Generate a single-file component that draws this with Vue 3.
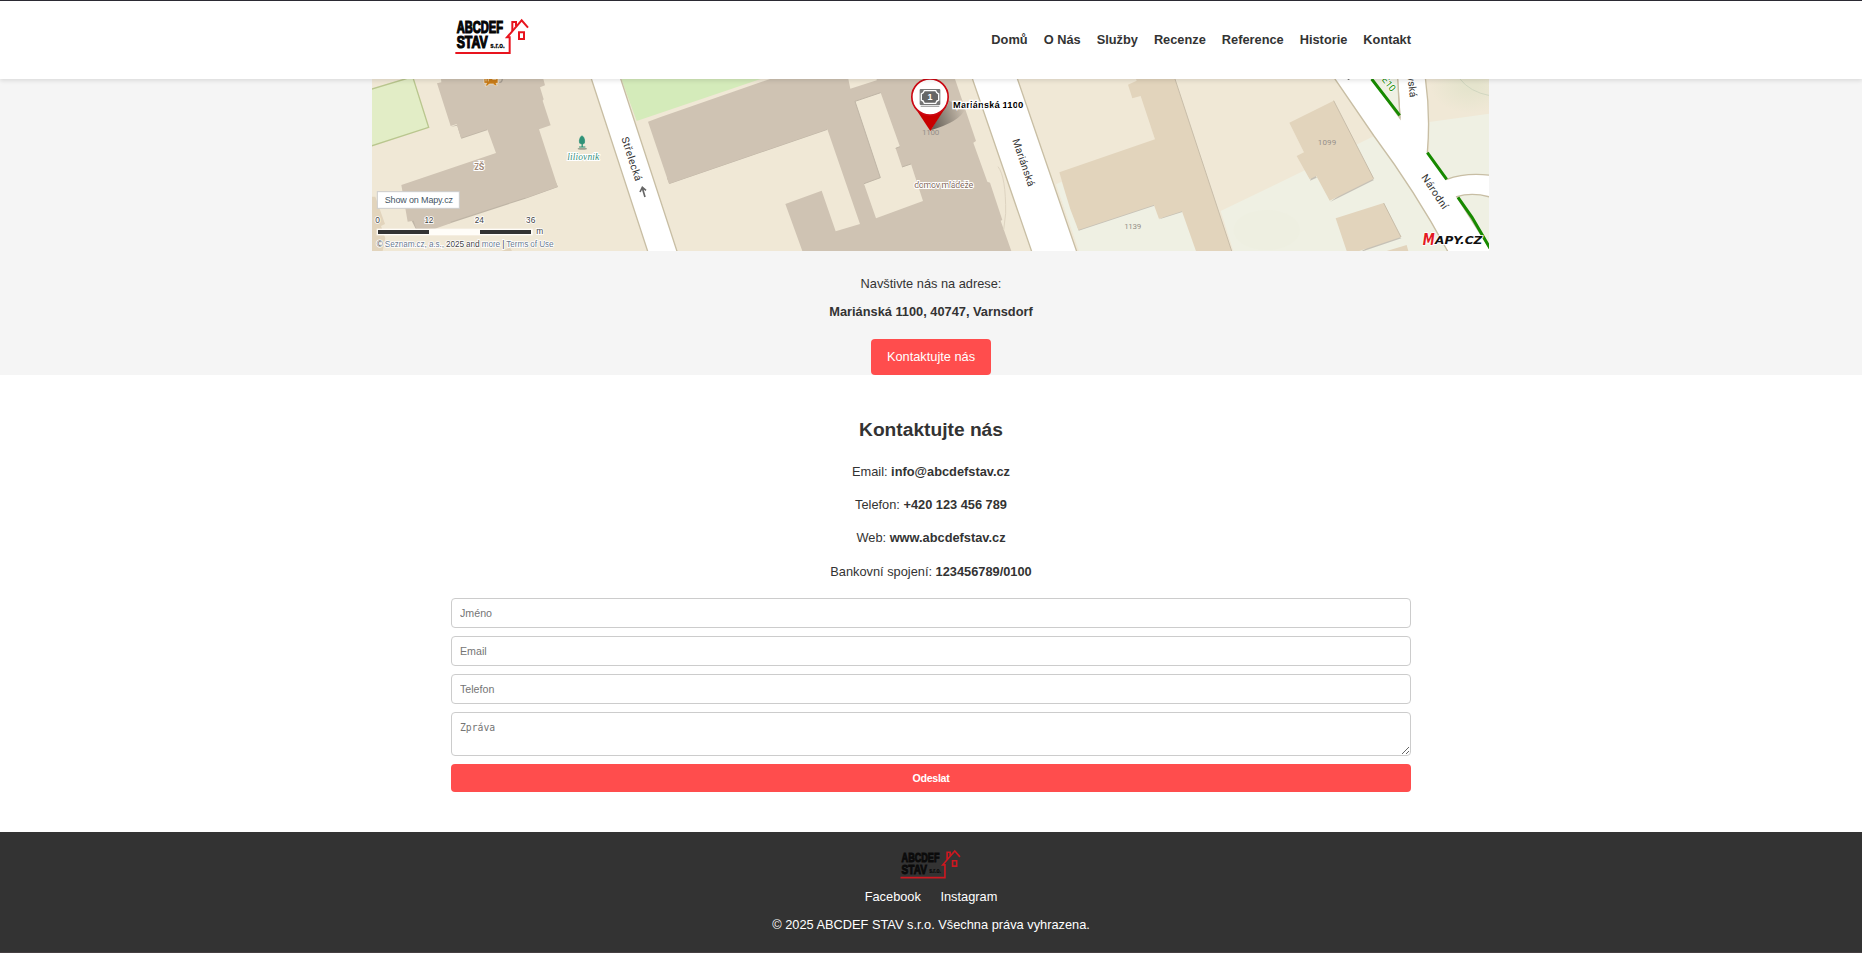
<script setup>
const nav = ['Domů', 'O Nás', 'Služby', 'Recenze', 'Reference', 'Historie', 'Kontakt']
const contacts = [
  ['Email:', 'info@abcdefstav.cz'],
  ['Telefon:', '+420 123 456 789'],
  ['Web:', 'www.abcdefstav.cz'],
  ['Bankovní spojení:', '123456789/0100'],
]
const fields = ['Jméno', 'Email', 'Telefon']
</script>

<template>
  <div class="page">
    <header class="header">
      <div class="bar">
        <svg class="logo" viewBox="30 54 222 110" role="img">
          <g id="brand">
            <g class="brand-text">
              <text x="35" y="100" font-size="47" textLength="139" lengthAdjust="spacingAndGlyphs">ABCDEF</text>
              <text x="35" y="145" font-size="49" textLength="93" lengthAdjust="spacingAndGlyphs">STAV</text>
              <text x="136" y="143" font-size="24" textLength="43" lengthAdjust="spacingAndGlyphs" class="thin">s.r.o.</text>
            </g>
            <g fill="none" stroke="#e8141e" stroke-width="6">
              <path d="M31 159H194V112H186L230 61L249 83" />
              <path d="M202 93V66H213V79" />
              <path d="M222 97H237V117H222Z" />
            </g>
          </g>
        </svg>
        <nav class="nav">
          <a v-for="item in nav" :key="item">{{ item }}</a>
        </nav>
      </div>
    </header>

    <section class="location">
      <svg class="map" viewBox="6 27 3351 516" preserveAspectRatio="none">
        <defs>
          <linearGradient id="pinShade" x1="0" y1="0.6" x2="1" y2="0.3">
            <stop offset="0" stop-color="#000" stop-opacity=".5" />
            <stop offset="1" stop-color="#000" stop-opacity="0" />
          </linearGradient>
          <radialGradient id="meadow">
            <stop offset=".2" stop-color="#e5e4cd" />
            <stop offset="1" stop-color="#e5e4cd" stop-opacity="0" />
          </radialGradient>
        </defs>
        <rect x="0" y="20" width="3360" height="530" fill="#f0e8d6" />
        <!-- grass and yards -->
        <path d="M0 59L105 27L128 20L176 172L0 229Z" fill="#e2edc6" stroke="#b9c68e" stroke-width="4" />
        <path d="M754 27L800 153L1172 27Z" fill="#d4ebba" />
        <path d="M2058 343L2075 335L2125 480L2352 405L2367 446L2436 424L2478 543H2127Z" fill="#eff0e3" />
        <path d="M2552 423L2800 303L3012 198L3178 250V156L3360 131V543H2590Z" fill="#eff0e3" />
        <ellipse cx="3300" cy="45" rx="120" ry="85" fill="url(#meadow)" />
        <path d="M3270 27Q3300 66 3360 77" fill="none" stroke="#c5ceb8" stroke-width="2" />
        <ellipse cx="2690" cy="480" rx="100" ry="60" fill="#eeefe1" />
        <!-- buildings -->
        <g fill="#bfb5a6" transform="translate(1 4)">
          <path d="M139 478L242 455L465 382L563 347L555 330L120 440Z" />
          <path d="M242 166L260 160L273 202L352 176L340 150Z" />
          <path d="M897 338L1372 175L1360 165L890 320Z" />
        </g>
        <g fill="#cfc3b3">
          <path d="M213 27L214 37L201 40L242 168L260 162L273 204L352 178L378 249L94 345L113 455L131 452L139 478L195 476L242 460V455L465 383L468 384L563 350L507 178L542 166L518 92L521 88L510 52L525 46L520 27Z" />
          <path d="M834 155L870 142L1200 27H1435L1441 56L1520 31V27H1755L1818 213L1810 218L1852 335L1860 338L1897 450L1892 452L1924 543H1297L1246 402L1355 362L1397 484L1470 462L1372 178L897 341Z" />
        </g>
        <path d="M1455 94L1532 68L1590 230L1577 235L1596 291L1623 282L1659 393L1518 445L1482 341L1531 323Z" fill="#f0e8d6" />
        <path d="M1455 94L1532 68M1482 341L1531 323L1455 94M1577 235L1590 230M1596 291L1623 282" fill="none" stroke="#bfb5a6" stroke-width="3" />
        <g fill="#c6c1b6" transform="translate(1 4)">
          <path d="M2125 478L2352 403L2340 380L2120 460ZM2367 444L2436 422V400Z" />
          <path d="M2879 392L3011 326L2990 310ZM2819 328L2839 319L2830 300ZM2968 543L3093 501L3070 480Z" />
        </g>
        <g fill="#e2d4bc">
          <path d="M2068 307L2355 208L2312 78L2287 85L2274 44L2300 32L2298 27H2415L2490 255L2585 543H2478L2436 424L2367 446L2352 405L2125 480L2101 418L2087 372Z" />
          <path d="M2758 158L2891 92L3011 326L2879 392L2839 318L2819 328L2780 258L2802 247Z" />
          <path d="M2897 445L3041 399L3093 501L2968 543H2930ZM3050 543L3110 525L3115 543Z" />
          <path d="M6 380H16L45 462L33 468L46 505L38 543H6ZM395 543L420 533L426 543Z" />
        </g>
        <path d="M2415 27L2490 255L2585 543M2891 92L3011 326M3041 399L3093 501" fill="none" stroke="#c8bda9" stroke-width="3" />
        <path d="M1884 290Q1908 320 1907 430L1901 480" fill="none" stroke="#ded4c1" stroke-width="3" />
        <!-- streets -->
        <g fill="#fff" stroke="#c8bea4" stroke-width="4">
          <path d="M661 17H749L924 553H836Z" />
          <path d="M1804 17H1939L2123 553H1988Z" />
          <path transform="translate(2490 0)" d="M398 17L405 27L522 198Q650 370 748 553H880L770 380Q820 364 880 384V317Q800 306 740 328L682 248Q692 130 675 17H592L600 145L508 17Z" />
        </g>
        <path d="M3005 27H3083L3088 140Z" fill="#eff0e3" />
        <path d="M3083 27L3090 145" stroke="#c8bea4" stroke-width="4" />
        <g fill="none" stroke="#178a00" stroke-width="9">
          <path d="M3005 27L3089 136M3172 248L3230 328M3264 382L3306 442L3360 535" />
        </g>
        <!-- map labels -->
        <g class="street" fill="#333" text-anchor="middle">
          <text transform="translate(775 270) rotate(72)" textLength="137">Střelecká</text>
          <text transform="translate(1951 281) rotate(71)" textLength="148">Mariánská</text>
          <text transform="translate(3186 371) rotate(56)" textLength="118">Národní</text>
          <text transform="translate(3116 51) rotate(84)">vská</text>
          <text transform="translate(3049 48) rotate(52)" class="route">E10</text>
        </g>
        <path d="M2933 28L2941 24" stroke="#555" stroke-width="5" />
        <path d="M825 381L817 354M810 366L817 352L828 361" fill="none" stroke="#666" stroke-width="5" />
        <g class="label" text-anchor="middle">
          <text x="328" y="299" textLength="30" font-weight="bold" fill="#a08878">ZŠ</text>
          <text x="1682" y="195" textLength="52" class="number">1100</text>
          <text x="2288" y="476" textLength="51" class="number">1139</text>
          <text x="2871" y="226" textLength="55" class="number">1099</text>
          <text x="1721" y="353" textLength="177" fill="#846a5b">domov mládeže</text>
          <text x="640" y="270" textLength="96" class="tree">liliovník</text>
        </g>
        <ellipse cx="637" cy="236" rx="14" ry="3" fill="#9ba08f" />
        <path d="M636 196C646 203 646 211 645 218Q643 223 639 223V229H646V233H627V229H634V223Q629 223 627 218C626 210 627 202 636 196Z" fill="#2f9277" stroke="#f3eedf" stroke-width="1" />
        <g fill="#c97c18" stroke="#f5ebd9" stroke-width="2">
          <path d="M342 20H384V40H378L382 47H375L370 42H358L352 48H345L350 40H342Z" />
          <path d="M348 27V34M355 27V34M367 28H379" />
        </g>
        <path d="M388 37Q397 38 397 24" fill="none" stroke="#a49b90" stroke-width="4" />
        <!-- place marker -->
        <path d="M1682 181L1724 112Q1739 105 1735 91L1785 118Q1770 155 1682 181Z" fill="url(#pinShade)" />
        <path d="M1632 109L1681 183L1729 109Z" fill="#c80000" />
        <circle cx="1680" cy="81" r="54.500" fill="#fff" stroke="#cc0712" stroke-width="5" />
        <path d="M1652 109H1708" stroke="#aaa" stroke-width="4" />
        <rect x="1649" y="57" width="62" height="48" rx="3" fill="#777" />
        <path d="M1663 62H1697Q1699 70 1706 72V90Q1699 92 1697 100H1663Q1661 92 1654 90V72Q1661 70 1663 62Z" fill="#666" stroke="#fff" stroke-width="4" />
        <text x="1680" y="91" class="note" text-anchor="middle">1</text>
        <text x="1749" y="113" class="place" textLength="211">Mariánská 1100</text>
        <!-- map controls -->
        <rect x="22" y="365" width="246" height="50" fill="#fff" stroke="#ccc" stroke-width="3" />
        <text x="44" y="399" class="show" textLength="205">Show on Mapy.cz</text>
        <g class="scale" text-anchor="middle">
          <text x="23" y="459">0</text>
          <text x="177" y="459" textLength="27">12</text>
          <text x="328" y="459" textLength="28">24</text>
          <text x="482" y="459" textLength="28">36</text>
          <text x="509" y="492">m</text>
        </g>
        <rect x="20" y="476" width="468" height="20" fill="#fffdf8" />
        <path d="M24 486H177M330 486H483" stroke="#333" stroke-width="12" />
        <text x="20" y="531" class="credit" textLength="531">© <tspan>Seznam.cz, a.s.,</tspan> 2025 and <tspan>more</tspan> | <tspan>Terms of Use</tspan></text>
        <g class="mapy">
          <text x="3158" y="525" font-size="49" fill="#e31922" textLength="36" lengthAdjust="spacingAndGlyphs">M</text>
          <text x="3195" y="523" font-size="34" fill="#111" textLength="142" lengthAdjust="spacingAndGlyphs">APY.CZ</text>
        </g>
      </svg>
      <p class="visit">Navštivte nás na adrese:</p>
      <p class="visit"><strong>Mariánská 1100, 40747, Varnsdorf</strong></p>
      <a class="cta">Kontaktujte nás</a>
    </section>

    <section class="contact">
      <h2>Kontaktujte nás</h2>
      <p v-for="row in contacts" :key="row[0]">{{ row[0] }} <strong>{{ row[1] }}</strong></p>
      <form class="form" @submit.prevent>
        <input v-for="f in fields" :key="f" type="text" :placeholder="f" />
        <textarea placeholder="Zpráva"></textarea>
        <button type="submit">Odeslat</button>
      </form>
    </section>

    <footer class="footer">
      <svg class="footer-logo" viewBox="30 54 222 110"><use href="#brand" /></svg>
      <div class="social"><a>Facebook</a><a>Instagram</a></div>
      <p>© 2025 ABCDEF STAV s.r.o. Všechna práva vyhrazena.</p>
    </footer>
  </div>
</template>

<style>
body {
  margin: 0;
  overflow: hidden;
}
</style>

<style scoped>
* {
  box-sizing: border-box;
}
.page {
  height: 953px;
  display: flex;
  flex-direction: column;
  font: 12.8px/20.48px "Liberation Sans", Arial, sans-serif;
  color: #333;
  background: #fff;
}
.header {
  height: 79px;
  flex: none;
  border-top: 1px solid #2b2a33;
  background: #fff;
  box-shadow: 0 2px 4px rgba(0, 0, 0, 0.1);
  position: relative;
}
.bar {
  width: 960px;
  height: 78px;
  margin: 0 auto;
  padding: 17px 0 0 4px;
  display: flex;
  justify-content: space-between;
}
.logo {
  width: 74px;
  height: 36.7px;
}
.brand-text text {
  font-family: "Liberation Sans", Arial, sans-serif;
  font-weight: bold;
  fill: #050505;
  stroke: #050505;
  stroke-width: 3.6px;
}
.brand-text .thin {
  stroke-width: 0.8px;
}
.nav {
  display: flex;
  gap: 16px;
  padding-top: 12px;
  font-weight: bold;
}
.location {
  height: 296px;
  flex: none;
  background: #f5f5f5;
  display: flex;
  flex-direction: column;
  align-items: center;
}
.map {
  width: 1117px;
  height: 172px;
  flex: none;
  margin: 0 1px 22.5px 0;
}
.visit {
  margin: 0 0 8px;
}
.cta {
  width: 120px;
  height: 36px;
  margin-top: auto;
  border-radius: 4px;
  background: #ff4d4d;
  color: #fff;
  text-align: center;
  line-height: 35px;
}
.contact {
  height: 457px;
  flex: none;
  width: 960px;
  margin: 0 auto;
  padding-top: 40px;
  text-align: center;
}
.contact h2 {
  margin: 0 0 16px;
  font-size: 19.2px;
  line-height: 30.7px;
}
.contact p {
  margin: 0 0 12.8px;
}
.form {
  display: flex;
  flex-direction: column;
  gap: 8px;
  padding-top: 3px;
}
.form input,
.form textarea {
  display: block;
  width: 100%;
  height: 30px;
  margin: 0;
  padding: 8px;
  border: 1px solid #ccc;
  border-radius: 4px;
  background: #fff;
  outline: none;
  font: 10.667px "Liberation Sans", Arial, sans-serif;
}
.form textarea {
  height: 44px;
  font: 9.75px/13px "DejaVu Sans Mono", monospace;
}
.form ::placeholder {
  color: #757575;
}
.form button {
  height: 28px;
  border: 0;
  border-radius: 4px;
  padding: 0;
  background: #ff4d4d;
  color: #fff;
  font: bold 10.667px "Liberation Sans", Arial, sans-serif;
  letter-spacing: -0.3px;
}
.footer {
  flex: 1;
  display: flex;
  flex-direction: column;
  align-items: center;
  padding-top: 16.5px;
  background: #333;
  border-bottom: 1px solid #453f42;
  color: #fff;
}
.footer-logo {
  width: 61px;
  height: 30px;
  margin-right: 1px;
  opacity: 0.85;
}
.social {
  display: flex;
  gap: 19.5px;
  margin-top: 8.5px;
}
.footer p {
  margin: 8px 0 0;
}
.street text {
  font: 31px Roboto, sans-serif;
  paint-order: stroke;
  stroke: #fff;
  stroke-width: 4px;
}
.street .route {
  font-size: 28px;
  fill: #178a00;
}
.label text {
  font-family: Roboto, sans-serif;
  font-size: 27px;
  paint-order: stroke;
  stroke: #fff;
  stroke-width: 6px;
}
.label .number {
  fill: #96908a;
  font-size: 24px;
  stroke-width: 0;
}
.label .tree {
  font: italic 29px "Liberation Serif", serif;
  fill: #35917e;
}
.note {
  font: bold 27px "Liberation Sans", sans-serif;
  fill: #fff;
}
.place {
  font: bold 28.5px "Liberation Sans", sans-serif;
  fill: #000;
  paint-order: stroke;
  stroke: #fff;
  stroke-width: 8px;
}
.show {
  font: 27px "Liberation Sans", sans-serif;
  fill: #445565;
}
.scale text,
.credit {
  font: 25px "Liberation Sans", sans-serif;
  fill: #444;
  paint-order: stroke;
  stroke: #fff;
  stroke-width: 5px;
}
.credit tspan {
  fill: #6b7a90;
}
.mapy text {
  font-family: "DejaVu Sans", sans-serif;
  font-weight: bold;
  font-style: italic;
  paint-order: stroke;
  stroke: #fff;
  stroke-width: 5px;
}
</style>
